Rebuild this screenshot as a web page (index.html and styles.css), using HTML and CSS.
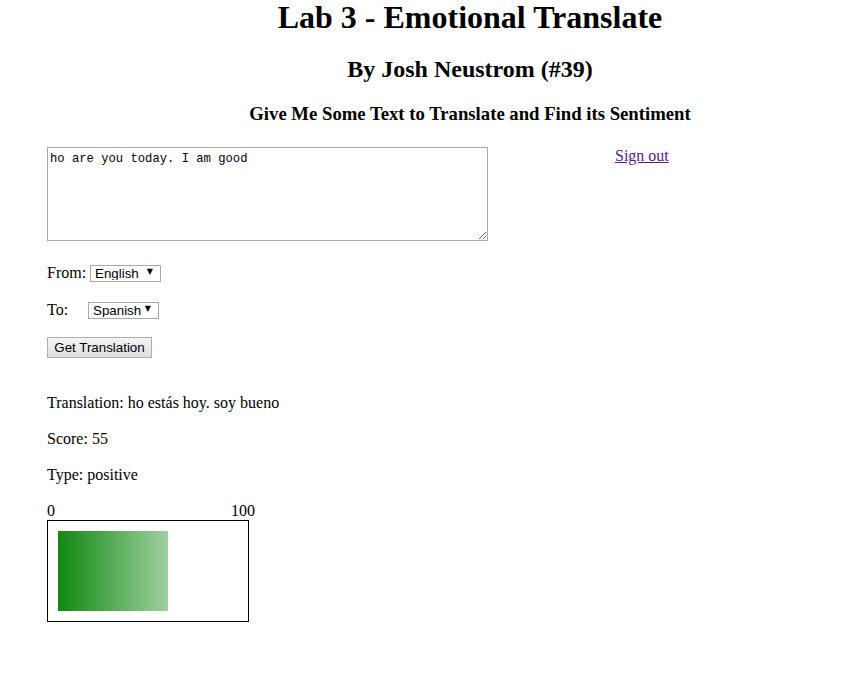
FILE: index.html
```html
<!DOCTYPE html>
<html>
<head>
<meta charset="utf-8">
<title>Lab 3 - Emotional Translate</title>
<link rel="stylesheet" href="styles.css">
</head>
<body>
<header class="header">
  <h1 class="title">Lab 3 - Emotional Translate</h1>
  <h2 class="author">By Josh Neustrom (#39)</h2>
  <h3 class="prompt">Give Me Some Text to Translate and Find its Sentiment</h3>
</header>
<main class="main">
  <div class="input-row">
    <textarea class="source">ho are you today. I am good</textarea>
    <a class="signout" href="#">Sign out</a>
  </div>
  <div class="lang-row">
    <span class="lang-label from-label">From:</span>
    <span class="select-wrap"><select class="lang-select"><option>English</option></select></span>
  </div>
  <div class="lang-row to-row">
    <span class="lang-label to-label">To:</span>
    <span class="select-wrap"><select class="lang-select"><option>Spanish</option></select></span>
  </div>
  <div class="action-row">
    <button class="translate-btn" type="button">Get Translation</button>
  </div>
  <p class="result first">Translation: ho estás hoy. soy bueno</p>
  <p class="result">Score: 55</p>
  <p class="result">Type: positive</p>
  <div class="scale">
    <span>0</span>
    <span>100</span>
  </div>
  <div class="meter">
    <div class="meter-bar" style="width: 110px"></div>
  </div>
</main>
</body>
</html>
```
FILE: styles.css
```css
html, body {
  margin: 0;
  padding: 0;
  background: #ffffff;
}

body {
  font-family: "Liberation Serif", "Times New Roman", serif;
  font-size: 16px;
  color: #000000;
  overflow: hidden;
}

.header {
  padding-left: 85px;
  text-align: center;
}

.title {
  margin: 0;
  font-size: 32px;
  line-height: 35.5px;
  font-weight: bold;
}

.author {
  margin: 19px 0 0;
  font-size: 24px;
  line-height: 28px;
  font-weight: bold;
}

.prompt {
  margin: 20px 0 0;
  font-size: 18.72px;
  line-height: 22px;
  font-weight: bold;
}

.main {
  padding-left: 47px;
}

.input-row {
  display: flex;
  align-items: flex-start;
  margin-top: 22px;
}

.source {
  box-sizing: border-box;
  width: 441px;
  height: 94px;
  margin: 0;
  padding: 3px 2px;
  border: 1px solid #a9a9a9;
  font-family: "Liberation Mono", "Courier New", monospace;
  font-size: 12.2px;
  line-height: 16px;
  color: #000;
  resize: both;
  outline: none;
}

.signout {
  margin-left: 127px;
  line-height: 18px;
  color: #551a8b;
  text-decoration: underline;
}

.lang-row {
  display: flex;
  align-items: center;
  height: 17px;
  margin-top: 23px;
}

.to-row {
  margin-top: 20px;
}

.lang-label {
  line-height: 17px;
}

.from-label {
  width: 43px;
}

.to-label {
  width: 41px;
}

.select-wrap {
  position: relative;
  display: inline-block;
  height: 17px;
}

.select-wrap::after {
  content: "\25BC";
  position: absolute;
  right: 8px;
  top: 3px;
  font-family: "DejaVu Sans", sans-serif;
  font-size: 8px;
  line-height: 10px;
  color: #000;
  pointer-events: none;
}

.lang-select {
  -webkit-appearance: none;
  appearance: none;
  box-sizing: border-box;
  width: 71px;
  height: 17px;
  margin: 0;
  padding: 0 0 1px 4px;
  border: 1px solid #a9a9a9;
  border-radius: 0;
  background: #ffffff;
  font-family: "Liberation Sans", Arial, sans-serif;
  font-size: 13.33px;
  line-height: 15px;
  color: #000;
  outline: none;
}

.action-row {
  margin-top: 19px;
  height: 21px;
}

.translate-btn {
  box-sizing: border-box;
  height: 21px;
  width: 105px;
  margin: 0;
  padding: 0 4px;
  border: 1px solid #adadad;
  border-radius: 0;
  background: linear-gradient(#f4f4f4, #dedede);
  font-family: "Liberation Sans", Arial, sans-serif;
  font-size: 13.33px;
  white-space: nowrap;
  color: #000;
}

.result {
  margin: 18px 0 0;
  line-height: 18px;
}

.result.first {
  margin-top: 36px;
}

.scale {
  display: flex;
  justify-content: space-between;
  width: 208px;
  margin-top: 17px;
  line-height: 19px;
}

.meter {
  box-sizing: border-box;
  width: 202px;
  height: 102px;
  border: 1px solid #000;
  padding: 10px;
}

.meter-bar {
  height: 80px;
  background: linear-gradient(to right, rgb(17, 136, 17), rgba(17, 136, 17, 0.4));
}
```
